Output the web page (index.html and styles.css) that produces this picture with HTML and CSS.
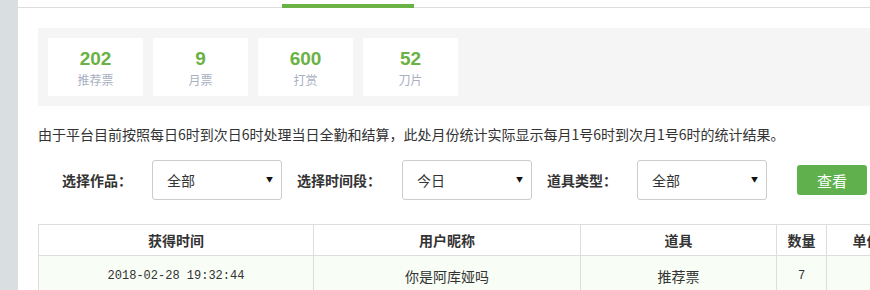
FILE: index.html
```html
<!DOCTYPE html>
<html lang="zh-CN">
  <head>
    <meta charset="utf-8">
    <title>道具统计</title>
    <link rel="stylesheet" href="styles.css">
  </head>
  <body>
    <div class="sidebar"></div>
    <div class="main">
      <div class="tabs">
        <span class="tab-active"></span>
      </div>

      <!-- 统计卡片 -->
      <div class="stats">
        <div class="stat">
          <div class="stat-num">202</div>
          <div class="stat-label">推荐票</div>
        </div>
        <div class="stat">
          <div class="stat-num">9</div>
          <div class="stat-label">月票</div>
        </div>
        <div class="stat">
          <div class="stat-num">600</div>
          <div class="stat-label">打赏</div>
        </div>
        <div class="stat">
          <div class="stat-num">52</div>
          <div class="stat-label">刀片</div>
        </div>
      </div>

      <p class="notice">由于平台目前按照每日6时到次日6时处理当日全勤和结算，此处月份统计实际显示每月1号6时到次月1号6时的统计结果。</p>

      <!-- 筛选 -->
      <form class="filter">
        <label for="book" class="filter-label first">选择作品：</label>
        <div class="select-box">
          <select id="book">
            <option>全部</option>
          </select>
        </div>
        <label for="period" class="filter-label">选择时间段：</label>
        <div class="select-box">
          <select id="period">
            <option>今日</option>
            <option>昨日</option>
            <option>本月</option>
          </select>
        </div>
        <label for="type" class="filter-label">道具类型：</label>
        <div class="select-box">
          <select id="type">
            <option>全部</option>
            <option>推荐票</option>
            <option>月票</option>
          </select>
        </div>
        <button type="button" class="btn-view">查看</button>
      </form>

      <table class="records">
        <thead>
          <tr>
            <th class="c-time">获得时间</th>
            <th class="c-user">用户昵称</th>
            <th class="c-item">道具</th>
            <th class="c-count">数量</th>
            <th class="c-price">单价</th>
            <th class="c-total">总计</th>
          </tr>
        </thead>
        <tbody>
          <tr>
            <td class="mono">2018-02-28 19:32:44</td>
            <td>你是阿库娅吗</td>
            <td>推荐票</td>
            <td class="mono">7</td>
            <td></td>
            <td></td>
          </tr>
        </tbody>
      </table>
    </div>
  </body>
</html>
```

FILE: styles.css
```css
html, body {
  margin: 0;
  height: 100%;
}
body {
  display: flex;
  overflow: hidden;
  font-family: "Noto Sans CJK SC", sans-serif;
  color: #333;
  background: #fff;
}
/* 左侧灰色栏 */
.sidebar {
  width: 18px;
  flex-shrink: 0;
  background: #d9dee0;
}
.main {
  flex: 1;
  min-width: 0;
  padding-left: 20px;
  overflow: hidden;
}
/* 顶部标签线 */
.tabs {
  height: 7px;
  border-bottom: 1px solid #dddddd;
  margin-left: -20px;
  display: flex;
}
.tab-active {
  width: 132px;
  height: 4px;
  margin: 3px 0 0 264px;
  background: #6ab245;
  align-self: flex-start;
  position: relative;
  top: 1px;
}
/* 统计卡片 */
.stats {
  display: flex;
  gap: 10px;
  margin-top: 20px;
  padding: 10px;
  background: #f5f5f5;
}
.stat {
  width: 95px;
  height: 58px;
  background: #fff;
  text-align: center;
  box-sizing: border-box;
  padding-top: 10px;
}
.stat-num {
  font: bold 19px/22px "Liberation Sans", Arial, sans-serif;
  color: #6ab245;
}
.stat-label {
  font-size: 12px;
  line-height: 20px;
  color: #a9b0bf;
}
.notice {
  margin: 18px 0 0;
  font-size: 14px;
  line-height: 20px;
  color: #333;
  white-space: nowrap;
}
/* 筛选区域 */
.filter {
  display: flex;
  align-items: center;
  margin-top: 16px;
  height: 40px;
}
.filter-label {
  font-size: 14px;
  font-weight: bold;
  margin: 0 20px 0 15px;
  white-space: nowrap;
}
.filter-label.first {
  margin-left: 24px;
}
.filter-label:nth-of-type(2) {
  margin-right: 21px;
}
.select-box {
  position: relative;
  width: 130px;
  height: 40px;
}
.select-box select {
  appearance: none;
  -webkit-appearance: none;
  width: 100%;
  height: 100%;
  box-sizing: border-box;
  border: 1px solid #cccccc;
  border-radius: 3px;
  background: #fff;
  padding: 0 14px;
  font: 14px "Noto Sans CJK SC", sans-serif;
  color: #333;
  outline: none;
}
.select-box::after {
  content: "▼";
  position: absolute;
  right: 9px;
  top: 14px;
  font-size: 7px;
  line-height: 10px;
  color: #111;
  pointer-events: none;
}
.btn-view {
  margin-left: 30px;
  width: 70px;
  height: 30px;
  border: none;
  border-radius: 3px;
  background: #60b04d;
  color: #fff;
  font: 15px "Noto Sans CJK SC", sans-serif;
}
/* 记录表格 */
.records {
  margin-top: 24px;
  border-collapse: collapse;
  table-layout: fixed;
  width: 1000px;
}
.records th,
.records td {
  border: 1px solid #dddddd;
  text-align: center;
  white-space: nowrap;
  overflow: hidden;
}
.records th {
  height: 30px;
  font-size: 14px;
  font-weight: bold;
  background: #fff;
  padding: 0;
}
.records td {
  height: 40px;
  font-size: 14px;
  background: #f8fdf5;
  padding: 0;
}
.records td.mono {
  font: 12px "Liberation Mono", monospace;
}
.c-time { width: 274px; }
.c-user { width: 266px; }
.c-item { width: 195px; }
.c-count { width: 49px; }
.c-price { width: 79px; }
```
